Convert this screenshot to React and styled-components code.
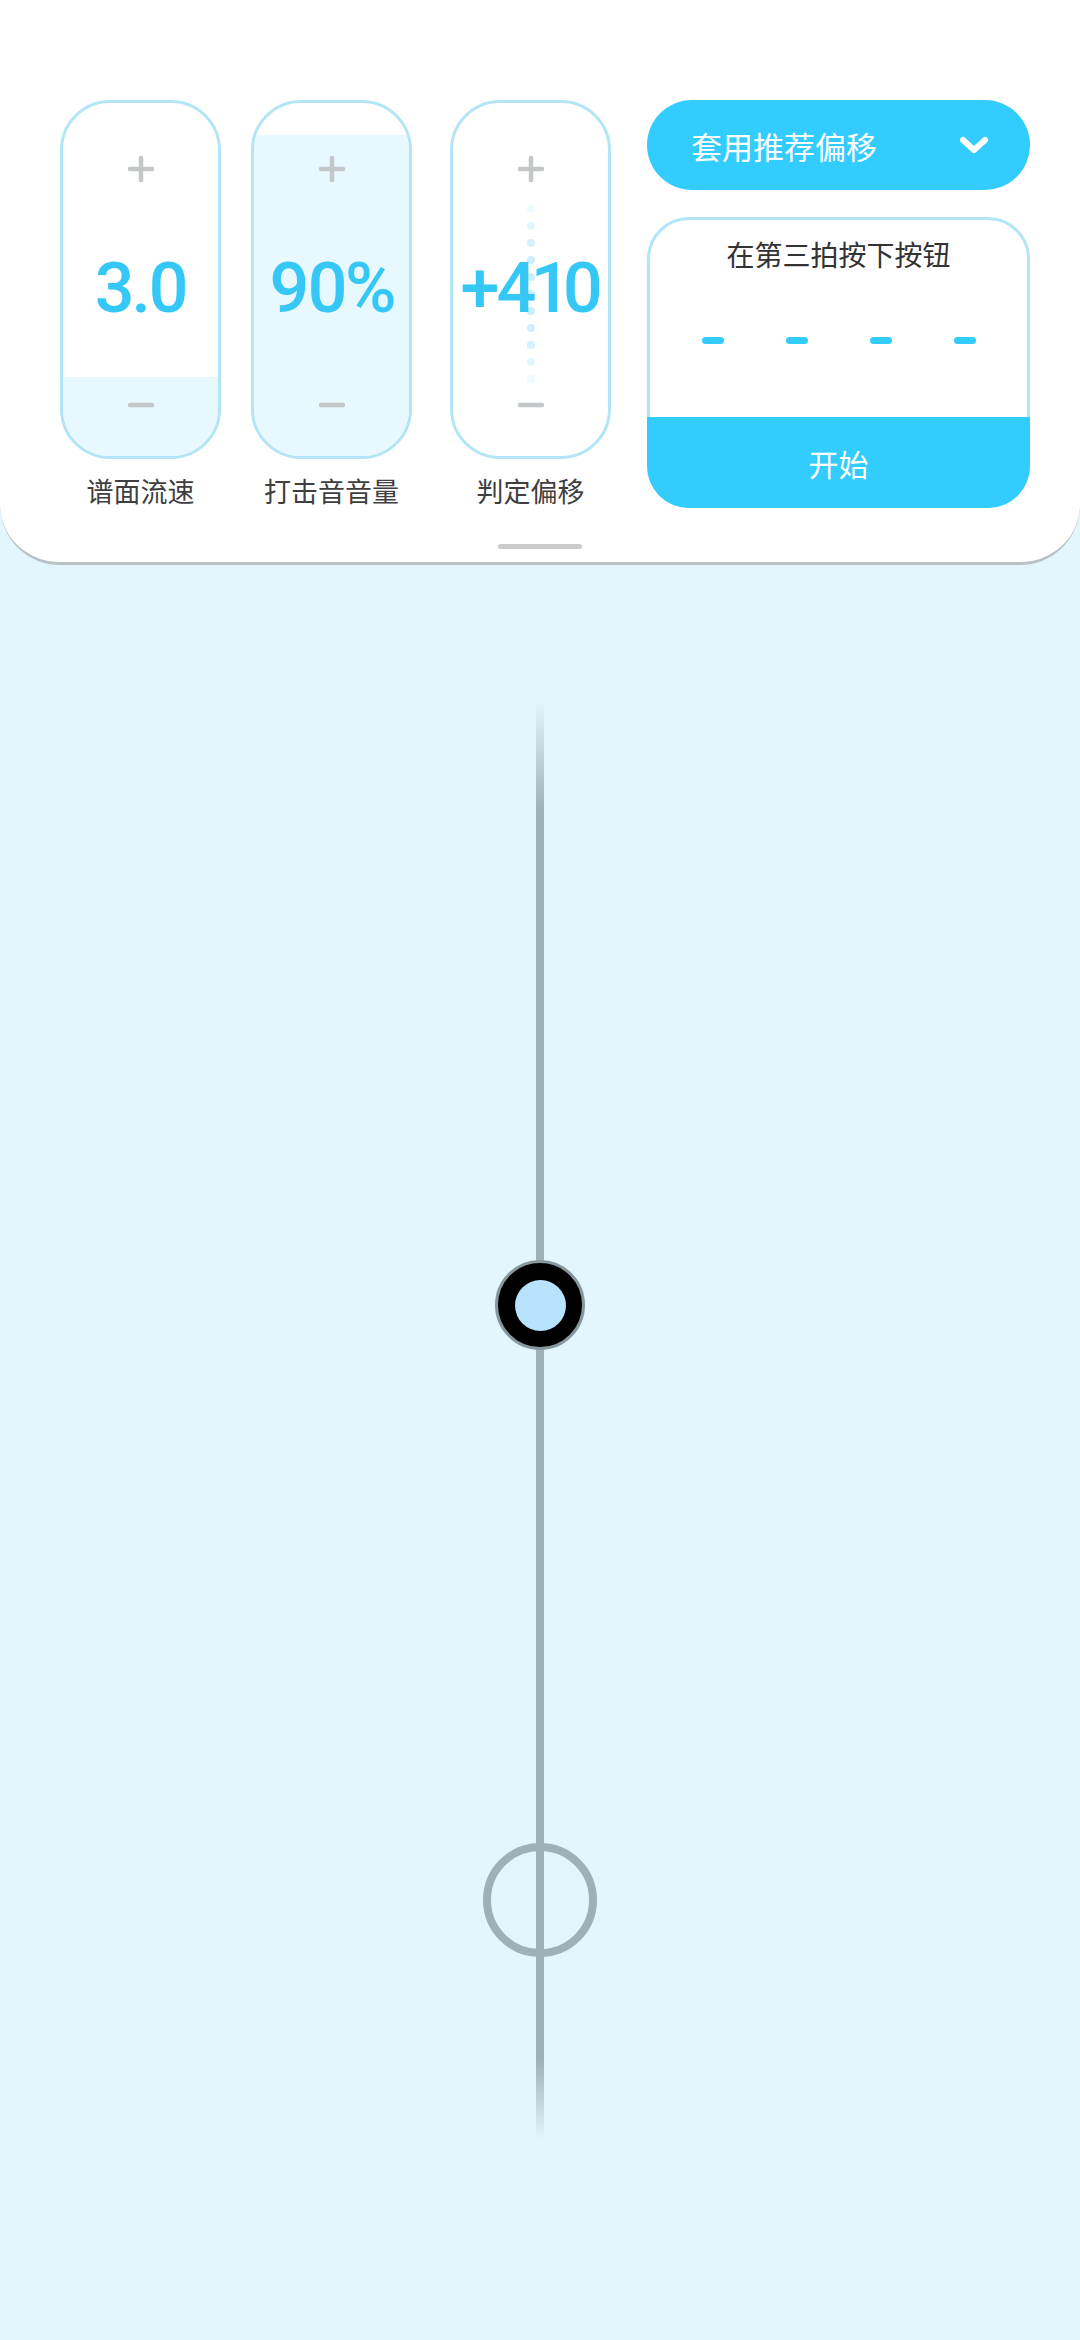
import React from "react";
import styled, { createGlobalStyle } from "styled-components";

const BLUE = "#33ccff";
const VALUE_BLUE = "#35c8f7";
const OUTLINE = "#b2e5f5";
const TRACK = "#9fb1b8";

const sliders = [
  { label: "谱面流速", value: "3.0", fill: 22.5, lead: 0 },
  { label: "打击音音量", value: "90%", fill: 91, lead: 30 },
  { label: "判定偏移", value: "+410", fill: 0, lead: 38, dots: true },
];

// opacity of the offset scale dots, faded at both ends
const dotLevels = [0.3, 0.55, 0.8, 0.95, 1, 1, 1, 0.95, 0.8, 0.55, 0.3];

const notes = [
  { kind: "hit", center: 604 },
  { kind: "ring", center: 1199 },
];

export default function App() {
  return (
    <>
      <GlobalStyle />
      <Page>
        <Panel>
          <Row>
            {sliders.map((s) => (
              <Column key={s.label} $lead={s.lead}>
                <SliderCard>
                  <Fill style={{ height: `${s.fill}%` }} />
                  {s.dots && (
                    <Dots>
                      {dotLevels.map((o, i) => (
                        <Dot key={i} style={{ opacity: o }} />
                      ))}
                    </Dots>
                  )}
                  <SliderBody>
                    <Step>
                      <svg width="26" height="26" viewBox="0 0 26 26">
                        <path d="M13 2v22M2 13h22" stroke="#c3c7c9" strokeWidth="4.5" strokeLinecap="round" />
                      </svg>
                    </Step>
                    <Value>{s.value}</Value>
                    <Step $gap={69}>
                      <svg width="26" height="26" viewBox="0 0 26 26">
                        <path d="M2 13h22" stroke="#c3c7c9" strokeWidth="4.5" strokeLinecap="round" />
                      </svg>
                    </Step>
                  </SliderBody>
                </SliderCard>
                <Label>{s.label}</Label>
              </Column>
            ))}
            <RightColumn>
              <Dropdown>
                <span>套用推荐偏移</span>
                <svg width="30" height="18" viewBox="0 0 30 18">
                  <polyline points="4,4 15,14 26,4" fill="none" stroke="#fff" strokeWidth="6" strokeLinecap="round" strokeLinejoin="round" />
                </svg>
              </Dropdown>
              <CalibCard>
                <Prompt>在第三拍按下按钮</Prompt>
                <Dashes>
                  {[0, 1, 2, 3].map((i) => (
                    <Dash key={i} />
                  ))}
                </Dashes>
                <StartButton>开始</StartButton>
              </CalibCard>
            </RightColumn>
          </Row>
          <Handle />
        </Panel>
        <Track>
          {notes.map((n) =>
            n.kind === "hit" ? (
              <HitNote key={n.center} style={{ top: n.center - 45 }}>
                <HitCore />
              </HitNote>
            ) : (
              <RingNote key={n.center} style={{ top: n.center - 57 }} />
            )
          )}
        </Track>
      </Page>
    </>
  );
}

const GlobalStyle = createGlobalStyle`
  body {
    margin: 0;
    background: #e3f5fd;
    font-family: "Noto Sans CJK SC", "Noto Sans", sans-serif;
  }
`;

const Page = styled.div`
  width: 1080px;
  min-height: 2340px;
  background: #e3f5fd;
  overflow: hidden;
`;

const Panel = styled.div`
  background: #fff;
  padding: 100px 0 13px;
  border-bottom: 3px solid #b6c2c8;
  border-radius: 0 0 60px 60px;
`;

const Row = styled.div`
  display: flex;
  align-items: flex-start;
  padding-left: 60px;
`;

const Column = styled.div`
  width: 161px;
  margin-left: ${(p) => p.$lead}px;
  display: flex;
  flex-direction: column;
  align-items: center;
`;

const SliderCard = styled.div`
  position: relative;
  box-sizing: border-box;
  width: 161px;
  height: 359px;
  border: 3px solid ${OUTLINE};
  border-radius: 50px;
  overflow: hidden;
  background: #fff;
`;

const Fill = styled.div`
  position: absolute;
  left: 0;
  right: 0;
  bottom: 0;
  background: #e7f8fe;
`;

const Dots = styled.div`
  position: absolute;
  top: 102px;
  left: 50%;
  transform: translateX(-50%);
  display: flex;
  flex-direction: column;
  gap: 9px;
`;

const Dot = styled.div`
  width: 8px;
  height: 8px;
  border-radius: 50%;
  background: #c9eefc;
`;

const SliderBody = styled.div`
  position: relative;
  display: flex;
  flex-direction: column;
  align-items: center;
  padding-top: 53px;
`;

const Step = styled.div`
  display: flex;
  width: 26px;
  height: 26px;
  margin-top: ${(p) => p.$gap || 0}px;
`;

const Value = styled.div`
  margin-top: 71px;
  height: 70px;
  font-family: Roboto, "Noto Sans", sans-serif;
  font-size: 70px;
  font-weight: 500;
  line-height: 70px;
  letter-spacing: -3px;
  font-variant-numeric: proportional-nums;
  color: ${VALUE_BLUE};
  white-space: nowrap;
`;

const Label = styled.div`
  margin-top: 14px;
  font-size: 27px;
  line-height: 35px;
  color: #3f3f3f;
  white-space: nowrap;
`;

const RightColumn = styled.div`
  width: 383px;
  margin-left: 36px;
  display: flex;
  flex-direction: column;
`;

const Dropdown = styled.div`
  box-sizing: border-box;
  height: 90px;
  padding: 0 41px 0 44px;
  border-radius: 45px;
  background: ${BLUE};
  color: #fff;
  font-size: 31px;
  display: flex;
  align-items: center;
  justify-content: space-between;
`;

const CalibCard = styled.div`
  box-sizing: border-box;
  margin-top: 27px;
  height: 291px;
  border: 3px solid ${OUTLINE};
  border-radius: 42px;
  display: flex;
  flex-direction: column;
  align-items: center;
`;

const Prompt = styled.div`
  margin-top: 16px;
  font-size: 28px;
  line-height: 36px;
  color: #333;
`;

const Dashes = styled.div`
  margin-top: 65px;
  display: flex;
  gap: 62px;
`;

const Dash = styled.div`
  width: 22px;
  height: 7px;
  border-radius: 4px;
  background: ${BLUE};
`;

const StartButton = styled.div`
  align-self: stretch;
  margin: auto -3px -3px;
  height: 91px;
  border-radius: 0 0 42px 42px;
  background: ${BLUE};
  color: #fff;
  font-size: 30px;
  display: flex;
  align-items: center;
  justify-content: center;
`;

const Handle = styled.div`
  width: 84px;
  height: 5px;
  margin: 36px auto 0;
  border-radius: 3px;
  background: #cccccc;
`;

const Track = styled.div`
  position: relative;
  height: 1439px;
  margin-top: 136px;

  &::before {
    content: "";
    position: absolute;
    top: 0;
    bottom: 0;
    left: 536px;
    width: 8px;
    background: linear-gradient(
      to bottom,
      rgba(159, 177, 184, 0) 0,
      ${TRACK} 110px,
      ${TRACK} calc(100% - 80px),
      rgba(159, 177, 184, 0) 100%
    );
  }
`;

const HitNote = styled.div`
  position: absolute;
  left: 495px;
  box-sizing: border-box;
  width: 90px;
  height: 90px;
  border-radius: 50%;
  border: 3px solid #86979d;
  background: #000;
  display: flex;
  align-items: center;
  justify-content: center;
`;

const HitCore = styled.div`
  width: 51px;
  height: 51px;
  border-radius: 50%;
  background: #b7e3fc;
`;

const RingNote = styled.div`
  position: absolute;
  left: 483px;
  box-sizing: border-box;
  width: 114px;
  height: 114px;
  border-radius: 50%;
  border: 8px solid ${TRACK};
`;
